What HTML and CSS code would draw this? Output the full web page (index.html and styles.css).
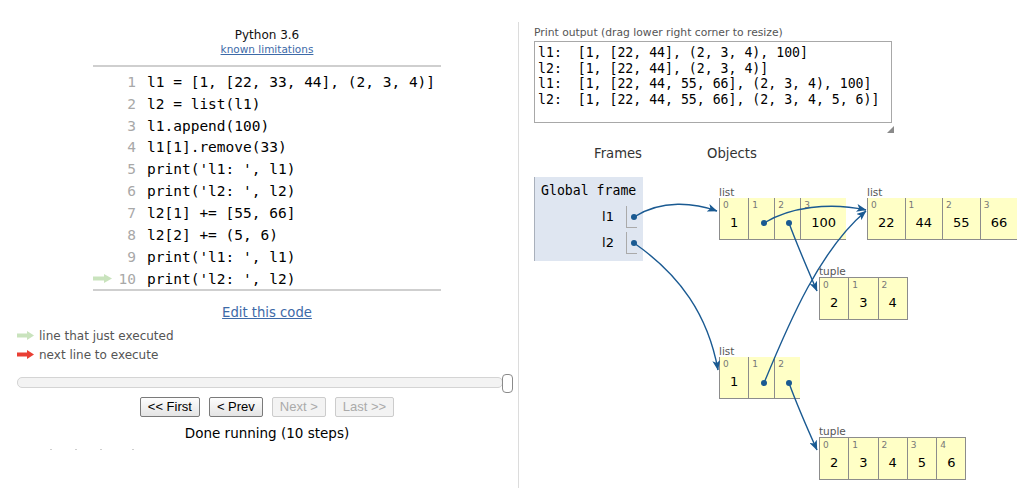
FILE: index.html
```html
<!DOCTYPE html>
<html lang="en">
<head>
<meta charset="utf-8">
<title>Python Tutor</title>
<link rel="stylesheet" href="styles.css">
</head>
<body>
<div class="page">
  <section class="left">
    <div class="lang">Python 3.6</div>
    <div class="limits"><a href="#">known limitations</a></div>
    <div class="code">
      <div class="line"><span class="ln">1</span><span class="src">l1 = [1, [22, 33, 44], (2, 3, 4)]</span></div>
      <div class="line"><span class="ln">2</span><span class="src">l2 = list(l1)</span></div>
      <div class="line"><span class="ln">3</span><span class="src">l1.append(100)</span></div>
      <div class="line"><span class="ln">4</span><span class="src">l1[1].remove(33)</span></div>
      <div class="line"><span class="ln">5</span><span class="src">print('l1: ', l1)</span></div>
      <div class="line"><span class="ln">6</span><span class="src">print('l2: ', l2)</span></div>
      <div class="line"><span class="ln">7</span><span class="src">l2[1] += [55, 66]</span></div>
      <div class="line"><span class="ln">8</span><span class="src">l2[2] += (5, 6)</span></div>
      <div class="line"><span class="ln">9</span><span class="src">print('l1: ', l1)</span></div>
      <div class="line"><span class="ln"><svg class="cur-arrow" width="19" height="9" viewBox="0 0 19 9"><rect x="0" y="2.5" width="12" height="4" fill="#c9e3bd"/><polygon points="11,0 19,4.5 11,9" fill="#c9e3bd"/></svg>10</span><span class="src">print('l2: ', l2)</span></div>
    </div>
    <div class="edit"><a href="#">Edit this code</a></div>
    <div class="legend">
      <div class="leg-row"><svg width="17" height="9" viewBox="0 0 17 9"><rect x="0" y="2.5" width="11" height="4" fill="#c9e3bd"/><polygon points="10,0 17,4.5 10,9" fill="#c9e3bd"/></svg><span>line that just executed</span></div>
      <div class="leg-row"><svg width="17" height="9" viewBox="0 0 17 9"><rect x="0" y="2.5" width="11" height="4" fill="#e93f34"/><polygon points="10,0 17,4.5 10,9" fill="#e93f34"/></svg><span>next line to execute</span></div>
    </div>
    <div class="slider"><span class="thumb"></span></div>
    <div class="buttons">
      <button type="button">&lt;&lt; First</button>
      <button type="button">&lt; Prev</button>
      <button type="button" disabled>Next &gt;</button>
      <button type="button" disabled>Last &gt;&gt;</button>
    </div>
    <div class="done">Done running (10 steps)</div>
    <div class="specks"><i></i><i></i><i></i><i></i></div>
  </section>

  <section class="right">
    <div class="print-label">Print output (drag lower right corner to resize)</div>
    <pre class="print-box">l1:  [1, [22, 44], (2, 3, 4), 100]
l2:  [1, [22, 44], (2, 3, 4)]
l1:  [1, [22, 44, 55, 66], (2, 3, 4), 100]
l2:  [1, [22, 44, 55, 66], (2, 3, 4, 5, 6)]</pre>
    <div class="grip-row"><svg width="7" height="7" viewBox="0 0 7 7"><polygon points="7,0 7,7 0,7" fill="#8a8a8a"/></svg></div>

    <div class="viz">
      <div class="viz-head"><div class="h-frames">Frames</div><div class="h-objects">Objects</div></div>
      <div class="frame">
        <div class="frame-title">Global frame</div>
        <div class="vars">
          <div class="var"><span class="vname">l1</span><span class="vval"></span></div>
          <div class="var"><span class="vname">l2</span><span class="vval"></span></div>
        </div>
      </div>

      <div class="hobj list o-l1">
        <div class="hlabel">list</div>
        <div class="cells">
          <div class="cell"><span class="idx">0</span><span class="val">1</span></div>
          <div class="cell"><span class="idx">1</span><span class="val ptr"></span></div>
          <div class="cell"><span class="idx">2</span><span class="val ptr"></span></div>
          <div class="cell"><span class="idx">3</span><span class="val">100</span></div>
        </div>
      </div>

      <div class="hobj list o-l2">
        <div class="hlabel">list</div>
        <div class="cells">
          <div class="cell"><span class="idx">0</span><span class="val">22</span></div>
          <div class="cell"><span class="idx">1</span><span class="val">44</span></div>
          <div class="cell"><span class="idx">2</span><span class="val">55</span></div>
          <div class="cell"><span class="idx">3</span><span class="val">66</span></div>
        </div>
      </div>

      <div class="hobj tuple o-t1">
        <div class="hlabel">tuple</div>
        <div class="cells">
          <div class="cell"><span class="idx">0</span><span class="val">2</span></div>
          <div class="cell"><span class="idx">1</span><span class="val">3</span></div>
          <div class="cell"><span class="idx">2</span><span class="val">4</span></div>
        </div>
      </div>

      <div class="hobj list o-l3">
        <div class="hlabel">list</div>
        <div class="cells">
          <div class="cell"><span class="idx">0</span><span class="val">1</span></div>
          <div class="cell"><span class="idx">1</span><span class="val ptr"></span></div>
          <div class="cell"><span class="idx">2</span><span class="val ptr"></span></div>
        </div>
      </div>

      <div class="hobj tuple o-t2">
        <div class="hlabel">tuple</div>
        <div class="cells">
          <div class="cell"><span class="idx">0</span><span class="val">2</span></div>
          <div class="cell"><span class="idx">1</span><span class="val">3</span></div>
          <div class="cell"><span class="idx">2</span><span class="val">4</span></div>
          <div class="cell"><span class="idx">3</span><span class="val">5</span></div>
          <div class="cell"><span class="idx">4</span><span class="val">6</span></div>
        </div>
      </div>

      <svg class="arrows" width="496" height="345" viewBox="534 146 496 345">
        <defs>
          <marker id="ah" markerWidth="10" markerHeight="8" refX="9.5" refY="4" orient="auto" markerUnits="userSpaceOnUse">
            <path d="M0,0 L10,4 L0,8 L2.5,4 Z" fill="#1a5a92"/>
          </marker>
        </defs>
        <g fill="none" stroke="#1a5a92" stroke-width="1.4">
          <path d="M634,217 C662,199 695,203 717,211" marker-end="url(#ah)"/>
          <path d="M634,243 C680,275 708,315 718,370" marker-end="url(#ah)"/>
          <path d="M764,223 C790,207 830,202 866,210" marker-end="url(#ah)"/>
          <path d="M789,223 C797,245 808,270 817,291" marker-end="url(#ah)"/>
          <path d="M764,383 C790,320 820,250 866,211" marker-end="url(#ah)"/>
          <path d="M789,383 C797,405 808,430 817,450" marker-end="url(#ah)"/>
        </g>
        <g fill="#1a5a92">
          <circle cx="634" cy="217" r="3"/>
          <circle cx="634" cy="243" r="3"/>
          <circle cx="764" cy="223" r="3"/>
          <circle cx="789" cy="223" r="3"/>
          <circle cx="764" cy="383" r="3"/>
          <circle cx="789" cy="383" r="3"/>
        </g>
      </svg>
    </div>
  </section>
</div>
</body>
</html>
```

FILE: styles.css
```css
* { box-sizing: border-box; }

body {
  margin: 0;
  background: #fff;
  color: #000;
  font-family: "DejaVu Sans", Verdana, sans-serif;
}

.page {
  display: flex;
  width: 1030px;
  height: 491px;
  padding-top: 22px;
  overflow: hidden;
}

/* ---------- left column ---------- */
.left {
  width: 519px;
  height: 466px;
  padding-left: 16px;
  border-right: 1px solid #dcdcdc;
}

.lang {
  margin-top: 6px;
  text-align: center;
  font-size: 12px;
  line-height: 14px;
  color: #111;
}

.limits {
  text-align: center;
  font-size: 10.5px;
  line-height: 14px;
}

.limits a,
.edit a {
  color: #3d6aa8;
  text-decoration: underline;
}

.code {
  margin: 9px 0 0 77px;
  width: 348px;
  border-top: 2px solid #cfcfcf;
  border-bottom: 2px solid #cfcfcf;
  padding-top: 4px;
  font-family: "DejaVu Sans Mono", monospace;
  font-size: 14.5px;
}

.line {
  display: flex;
  align-items: center;
  height: 21.85px;
}

.ln {
  width: 43px;
  display: flex;
  justify-content: flex-end;
  align-items: center;
  color: #a8a8a8;
}

.cur-arrow {
  margin-right: auto;
}

.src {
  padding-left: 11px;
  white-space: pre;
  color: #000;
}

.edit {
  margin-top: 13px;
  text-align: center;
  font-size: 13.2px;
  line-height: 17px;
}

.legend {
  margin-top: 5px;
  margin-left: 1px;
  font-size: 12px;
  color: #555;
}

.leg-row {
  display: flex;
  align-items: center;
  gap: 5px;
  height: 19px;
}

.slider {
  position: relative;
  margin-top: 12.5px;
  margin-left: 1px;
  width: 486px;
  height: 11px;
  border: 1px solid #d4d4d4;
  border-radius: 5px;
  background: #f3f3f3;
}

.thumb {
  position: absolute;
  left: 484px;
  top: -4px;
  width: 11px;
  height: 19px;
  border: 1px solid #8a8a8a;
  border-radius: 4px;
  background: #fff;
}

.buttons {
  display: flex;
  justify-content: center;
  gap: 9px;
  margin-top: 9px;
}

.buttons button {
  height: 20px;
  padding: 0 7px;
  border: 1px solid #7a7a7a;
  border-radius: 2px;
  background: linear-gradient(#fdfdfd, #e4e4e4);
  color: #000;
  font-family: "Liberation Sans", Arial, sans-serif;
  font-size: 13px;
  line-height: 18px;
}

.buttons button:disabled {
  border-color: #cccccc;
  background: #f3f3f3;
  color: #aaaaaa;
}

.done {
  margin-top: 7px;
  text-align: center;
  font-size: 13.5px;
  line-height: 18px;
}

.specks {
  display: flex;
  margin-top: 7px;
  margin-left: 34px;
}

.specks i {
  width: 2px;
  height: 1px;
  margin-right: 23px;
  background: #cfcfcf;
}

.specks i:nth-child(3) {
  margin-right: 30px;
}

/* ---------- right column ---------- */
.right {
  width: 511px;
  padding-left: 15px;
}

.print-label {
  margin-top: 4px;
  font-size: 10.75px;
  line-height: 13px;
  color: #555;
}

.print-box {
  margin: 2px 0 0;
  width: 358px;
  height: 82px;
  border: 1px solid #a8a8a8;
  padding: 3px;
  font-family: "DejaVu Sans Mono", monospace;
  font-size: 13.2px;
  line-height: 15.7px;
  white-space: pre;
  overflow: hidden;
}

.grip-row {
  display: flex;
  justify-content: flex-end;
  align-items: flex-start;
  width: 360px;
  height: 10px;
  padding-top: 3px;
}

.viz {
  position: relative;
  margin-top: 13px;
  width: 496px;
  height: 345px;
}

.viz-head {
  display: flex;
  font-size: 13.2px;
  line-height: 16px;
  color: #333;
}

.h-frames {
  width: 168px;
  text-align: center;
}

.h-objects {
  padding-left: 5px;
}

.frame {
  margin-top: 15px;
  width: 109px;
  height: 84px;
  padding: 6px 6px 0 6px;
  background: #dfe6f1;
  border-left: 1px solid #a9b0bb;
}

.frame-title {
  font-family: "DejaVu Sans Mono", monospace;
  font-size: 13.2px;
  line-height: 16px;
}

.vars {
  display: flex;
  flex-direction: column;
  gap: 4px;
  margin-top: 7px;
}

.var {
  display: flex;
  justify-content: flex-end;
  align-items: center;
  height: 22px;
}

.vname {
  margin-right: 12px;
  font-size: 13px;
  line-height: 22px;
}

.vval {
  width: 11px;
  height: 22px;
  border-left: 1px solid #aaa;
  border-bottom: 1px solid #aaa;
}

/* heap objects: nodes on the diagram canvas */
.hobj {
  position: absolute;
}

.o-l1 { left: 185px; top: 40px; }
.o-l2 { left: 333px; top: 40px; }
.o-t1 { left: 285px; top: 119px; }
.o-l3 { left: 185px; top: 199px; }
.o-t2 { left: 285px; top: 279px; }

.hlabel {
  height: 12px;
  font-size: 10.5px;
  line-height: 12px;
  color: #555;
}

.cells {
  display: flex;
}

.cell {
  display: flex;
  flex-direction: column;
  height: 42px;
  background: #ffffc6;
  border-left: 1px solid #8c8c8c;
  border-bottom: 1px solid #8c8c8c;
}

.tuple .cell {
  height: 43px;
  border-top: 1px solid #8c8c8c;
}

.tuple .cell:last-child {
  border-right: 1px solid #8c8c8c;
}

.idx {
  padding: 1px 0 0 3px;
  font-size: 9px;
  line-height: 12px;
  color: #777;
}

.val {
  margin-top: 4px;
  padding: 0 10px;
  font-size: 13px;
  line-height: 16px;
  text-align: center;
}

.val.ptr {
  width: 25px;
  height: 16px;
}

.arrows {
  position: absolute;
  left: 0;
  top: 0;
  overflow: visible;
  pointer-events: none;
}
```
